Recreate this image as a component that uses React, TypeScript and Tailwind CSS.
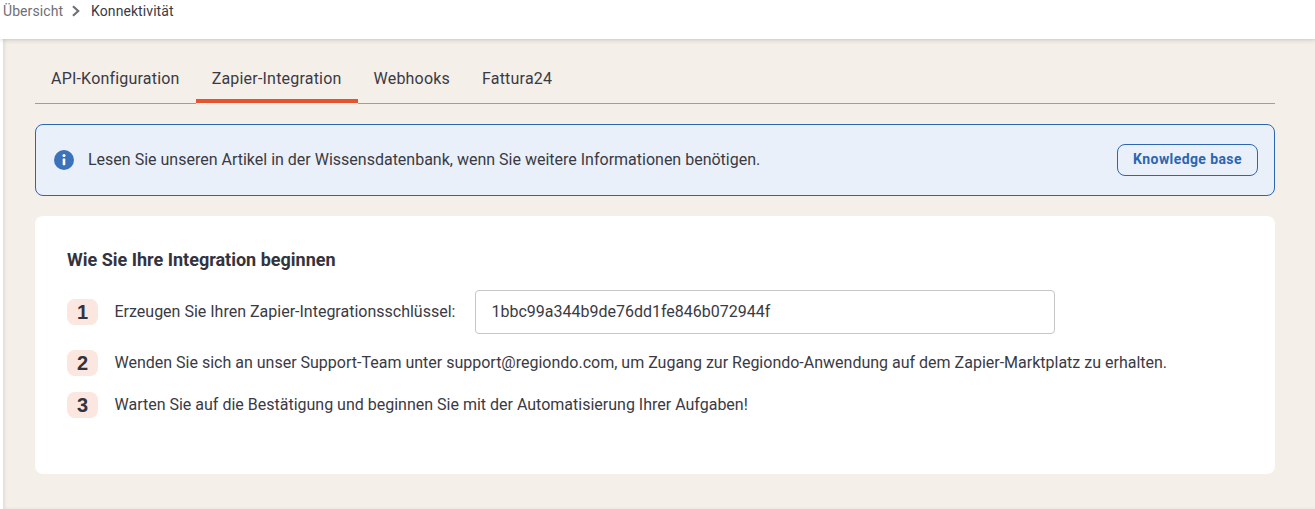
import React from 'react';

const tabs = ['API-Konfiguration', 'Zapier-Integration', 'Webhooks', 'Fattura24'];

const StepBadge: React.FC<{ n: number }> = ({ n }) => (
  <span className="flex h-[26px] w-[31px] shrink-0 items-center justify-center rounded-lg bg-[#fbe6e0] font-['Liberation_Sans',sans-serif] text-[20px] font-bold text-[#33333d]">
    {n}
  </span>
);

export default function App() {
  return (
    <div className="flex h-[509px] w-[1315px] flex-col overflow-hidden bg-white font-['Roboto',sans-serif] text-[#3a3a44]">
      <header className="relative z-10 h-[39px] shrink-0 bg-white shadow-[0_1px_5px_rgba(0,0,0,0.16)]">
        <nav className="flex items-center pl-[3px] pt-[3px] text-sm leading-4 tracking-[0.08px]">
          <span className="text-[#6f6f76]">Übersicht</span>
          <svg width="10" height="12" viewBox="0 0 10 12" className="ml-[8px] mr-[10px]" fill="none" stroke="#6f6f76" strokeWidth="2.2">
            <path d="M2 1.2 7.2 6 2 10.8" />
          </svg>
          <span>Konnektivität</span>
        </nav>
      </header>

      <div className="flex min-h-0 flex-1">
        <div className="w-[3px] shrink-0 bg-white" />
        <main className="min-w-0 flex-1 bg-[#f4efe9] pl-8 pr-10 shadow-[inset_2px_0_3px_rgba(0,0,0,0.07)]">
          <div className="flex h-[65px] items-end border-b border-[#a09d9a]">
            {tabs.map((tab, i) => (
              <div
                key={tab}
                className={`-mb-px flex h-[50px] items-center border-b px-4 text-base tracking-[0.2px] ${
                  i === 1 ? 'border-[#f4efe9] shadow-[inset_0_-4px_0_#e6532d]' : 'border-transparent'
                }`}
              >
                {tab}
              </div>
            ))}
          </div>

          <section className="mt-5 flex h-[72px] items-center rounded-lg border border-[#2b66b1] bg-[#e9f0fa] pl-[18px] pr-4">
            <svg width="20" height="20" viewBox="0 0 20 20" className="shrink-0">
              <circle cx="10" cy="10" r="10" fill="#3b72b9" />
              <circle cx="10" cy="5.6" r="1.5" fill="#fff" />
              <rect x="8.7" y="8.6" width="2.6" height="6.6" rx="0.4" fill="#fff" />
            </svg>
            <p className="ml-[14px] flex-1 text-base">
              Lesen Sie unseren Artikel in der Wissensdatenbank, wenn Sie weitere Informationen benötigen.
            </p>
            <button className="h-8 w-[141px] rounded-lg border border-[#2b66b1] pb-0.5 text-sm font-bold tracking-[0.4px] text-[#2b66b1]">
              Knowledge base
            </button>
          </section>

          <section className="mt-5 h-[258px] rounded-lg bg-white px-8 pt-[33px]">
            <h2 className="text-lg font-bold leading-[22px] text-[#33333d]">Wie Sie Ihre Integration beginnen</h2>
            <div className="mt-[19px] flex items-center">
              <StepBadge n={1} />
              <span className="ml-[16.5px] text-base">Erzeugen Sie Ihren Zapier-Integrationsschlüssel:</span>
              <div className="ml-5 flex h-11 w-[580px] items-center rounded border border-[#c6c6c6] pl-[15px] text-base">
                1bbc99a344b9de76dd1fe846b072944f
              </div>
            </div>
            <div className="mt-[16px] flex items-center">
              <StepBadge n={2} />
              <span className="ml-[16.5px] text-base">
                Wenden Sie sich an unser Support-Team unter support@regiondo.com, um Zugang zur Regiondo-Anwendung auf dem Zapier-Marktplatz zu erhalten.
              </span>
            </div>
            <div className="mt-[16px] flex items-center">
              <StepBadge n={3} />
              <span className="ml-[16.5px] text-base">
                Warten Sie auf die Bestätigung und beginnen Sie mit der Automatisierung Ihrer Aufgaben!
              </span>
            </div>
          </section>
        </main>
      </div>
    </div>
  );
}
